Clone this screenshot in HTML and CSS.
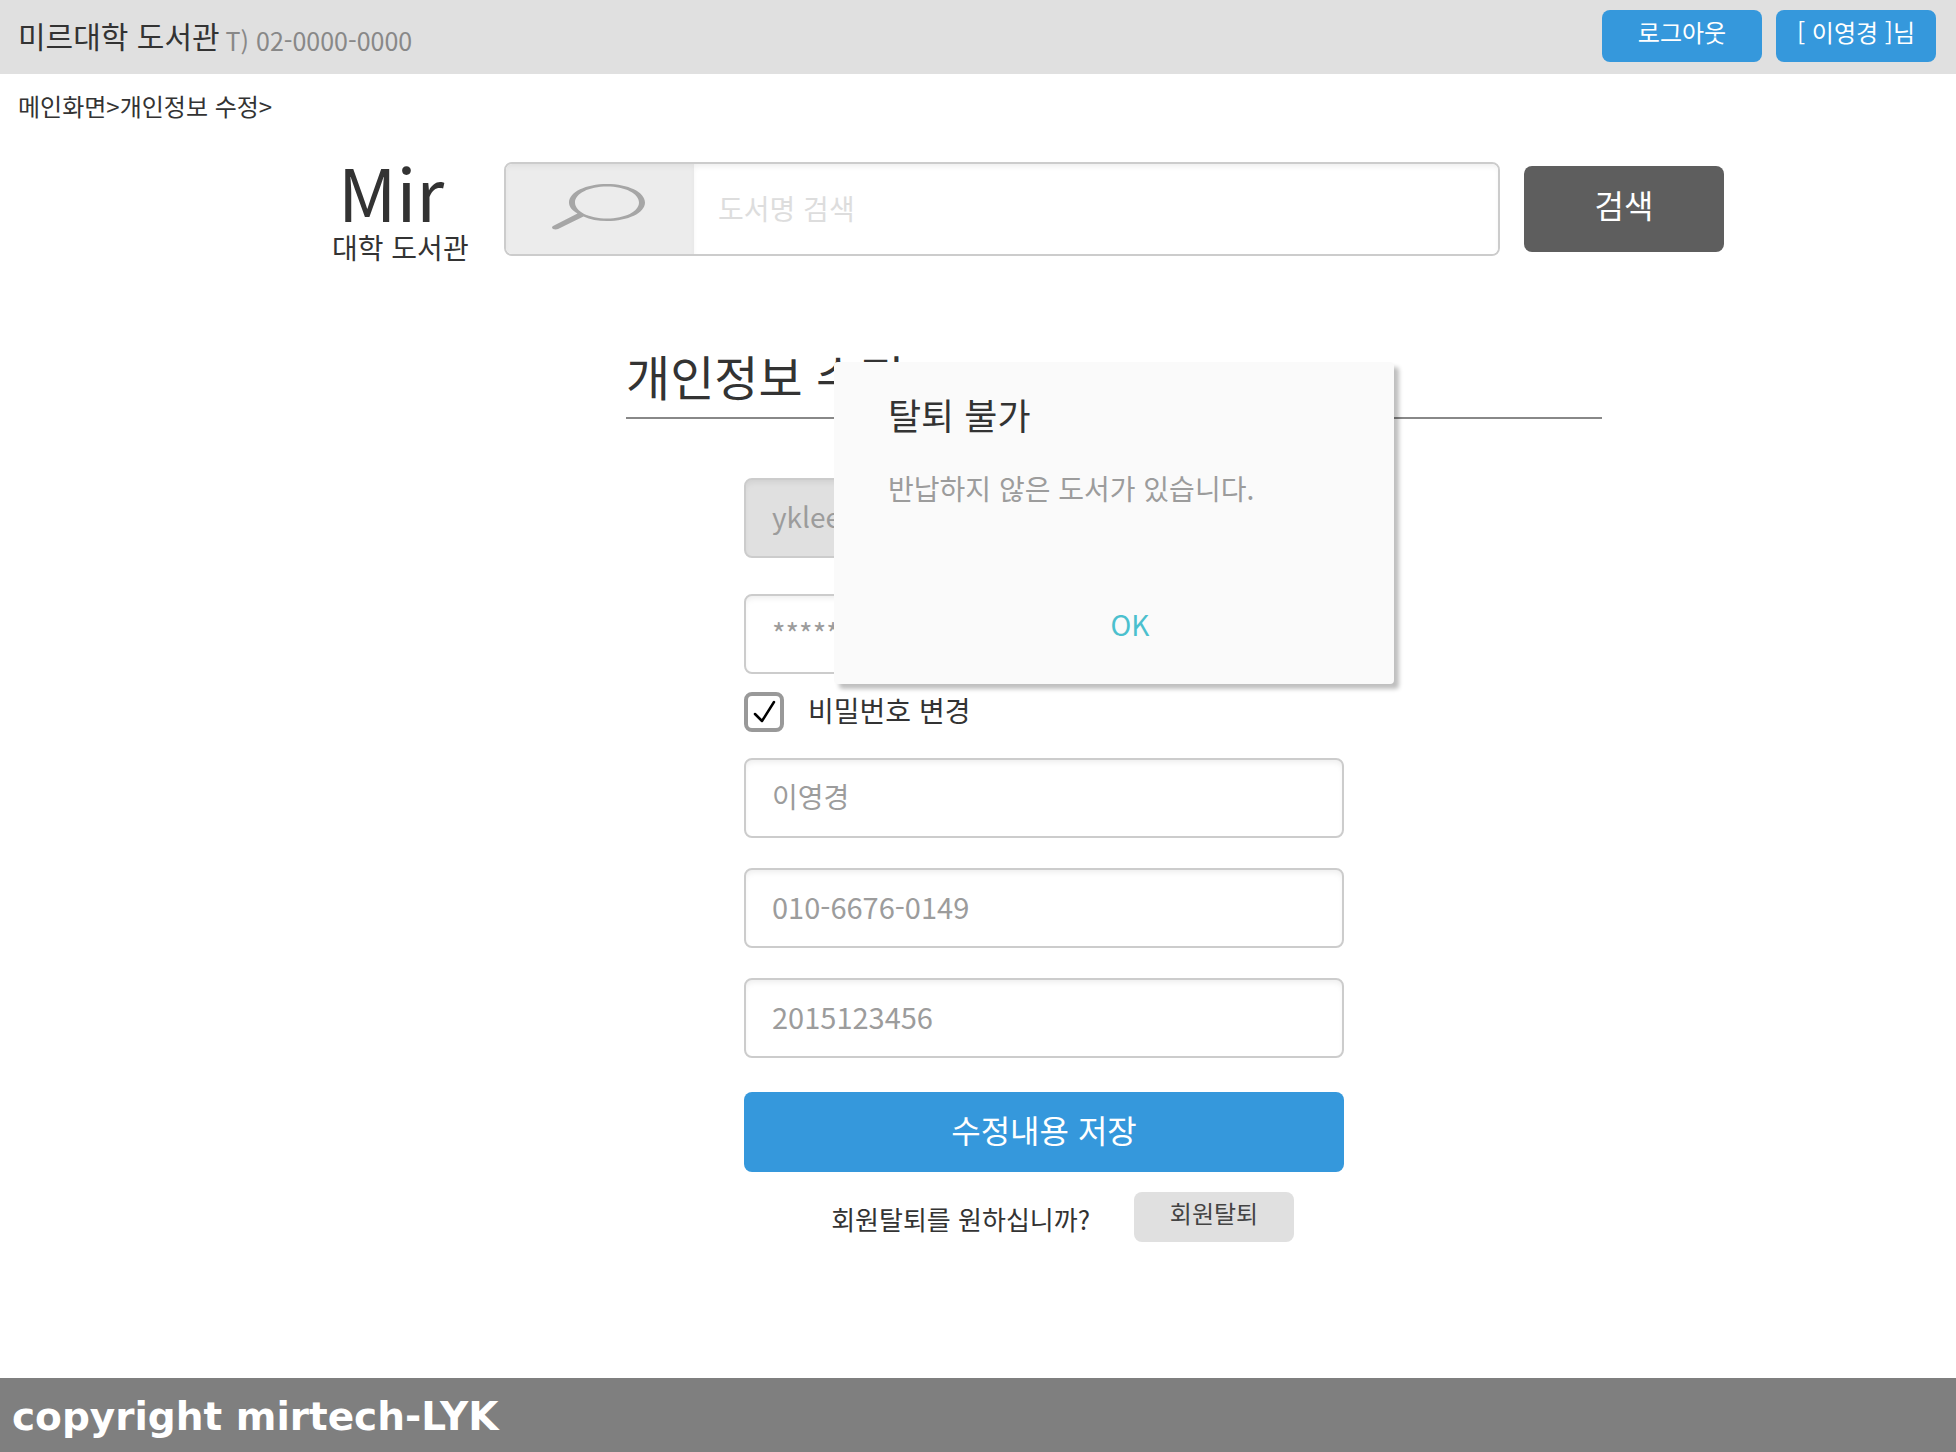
FILE: index.html
```html
<!DOCTYPE html>
<html lang="ko">
<head>
<meta charset="utf-8">
<title>미르대학 도서관 - 개인정보 수정</title>
<meta name="viewport" content="width=device-width, initial-scale=1">
<link rel="stylesheet" href="styles.css">
</head>
<body>
<div class="page">
  <header class="topbar">
    <div class="brand">
      <p class="brand-name">미르대학 도서관</p>
      <p class="phone">T) 02-0000-0000</p>
    </div>
    <div class="account">
      <button type="button" class="btn btn-small btn-blue">로그아웃</button>
      <button type="button" class="btn btn-small btn-blue">[ 이영경 ]님</button>
    </div>
  </header>

  <nav class="breadcrumb" aria-label="현재 위치"><a href="#main">메인화면</a>&gt;<a href="#edit">개인정보 수정</a>&gt;</nav>

  <form class="search" role="search">
    <a class="logo" href="#main"><span class="logo-name">Mir</span><span class="logo-sub">대학 도서관</span></a>
    <div class="search-box">
      <label class="search-icon" for="q" aria-label="도서명 검색">
        <svg width="94" height="46" viewBox="0 0 94 46" fill="none" aria-hidden="true">
          <path fill="#a6a6a6" fill-rule="evenodd" d="M55 0C76 0 93 8 93 18.500S76 37 55 37C46 37 38 35.500 31.500 32.500L6 45C4 46 0 45.500 0 43.500C0 42.800 .5 42.200 1.500 41.700L25.500 29.500C20 26.500 17 22.800 17 18.500C17 8 34 0 55 0ZM55 2.500C37 2.500 23 9.500 23 18.500S37 34.500 55 34.500S87 27.500 87 18.500S73 2.500 55 2.500Z"/>
        </svg>
      </label>
      <input class="search-input" id="q" type="text" placeholder="도서명 검색">
    </div>
    <button type="submit" class="btn btn-search">검색</button>
  </form>

  <main class="content" id="edit">
    <h1 class="title">개인정보 수정</h1>
    <form class="form">
      <input class="field" type="text" aria-label="아이디" value="yklee" disabled>
      <input class="field field-latin field-secret" type="text" aria-label="비밀번호" value="********">
      <label class="check"><input class="check-box" type="checkbox" checked><span>비밀번호 변경</span></label>
      <input class="field" type="text" aria-label="이름" value="이영경">
      <input class="field field-latin" type="text" aria-label="전화번호" value="010-6676-0149">
      <input class="field field-latin" type="text" aria-label="학번" value="2015123456">
      <button type="submit" class="btn btn-blue btn-save">수정내용 저장</button>
      <div class="leave">
        <span class="leave-text">회원탈퇴를 원하십니까?</span>
        <button type="button" class="btn btn-small btn-gray">회원탈퇴</button>
      </div>
    </form>
  </main>

  <footer class="footer">copyright mirtech-LYK</footer>

  <section class="modal" role="alertdialog" aria-labelledby="modal-title" aria-describedby="modal-text">
    <h2 class="modal-title" id="modal-title">탈퇴 불가</h2>
    <p class="modal-text" id="modal-text">반납하지 않은 도서가 있습니다.</p>
    <button type="button" class="modal-ok">OK</button>
  </section>
</div>
</body>
</html>
```

FILE: styles.css
```css
* { box-sizing: border-box; }

body {
  margin: 0;
  background: #fff;
  color: #333;
  font-family: "Noto Sans CJK KR", sans-serif;
  font-size: 24px;
  line-height: 36px;
}

button, input { font: inherit; margin: 0; }
a { color: inherit; text-decoration: none; }
h1, h2, p { margin: 0; font-weight: 400; }

.page {
  position: relative;
  display: flex;
  flex-direction: column;
  min-height: 100vh;
}

.topbar {
  display: flex;
  justify-content: space-between;
  align-items: flex-start;
  padding: 10px 20px 4px 18px;
  background: #e0e0e0;
}
.brand { display: flex; align-items: flex-start; gap: 6px; }
.brand-name { font-size: 30px; line-height: 50px; }
.phone { font-size: 25px; line-height: 60px; color: #888; }
.account { display: flex; gap: 14px; }

.btn {
  border: 0;
  border-radius: 8px;
  color: #fff;
  cursor: pointer;
}
.btn-small { width: 160px; height: 52px; padding: 0 0 8px; }
.btn-blue { background: #3598dc; }
.btn-gray { height: 50px; background: #e0e0e0; color: #444; }

.breadcrumb { padding: 14px 18px; }

.search {
  display: flex;
  align-items: center;
  padding: 17px 232px 0 332px;
}
.logo {
  display: flex;
  flex-direction: column;
  gap: 4px;
  width: 172px;
}
.logo-name { padding-left: 6px; font-size: 72px; line-height: 72px; }
.logo-sub { font-size: 28px; line-height: 32px; }
.search-box {
  display: flex;
  flex: 1;
  height: 94px;
  overflow: hidden;
  border: 2px solid #ccc;
  border-radius: 8px;
}
.search-icon {
  display: flex;
  align-items: center;
  justify-content: center;
  width: 188px;
  padding: 0 2px 4px 0;
  background: #ececec;
  box-shadow: inset 0 4px 6px -2px rgba(0, 0, 0, 0.06);
}
.search-input {
  flex: 1;
  min-width: 0;
  padding: 0 24px 2px;
  border: 0;
  background: #fff;
  box-shadow: inset 0 4px 6px -2px rgba(0, 0, 0, 0.08);
  font-size: 28px;
}
.search-input::placeholder { color: #ddd; opacity: 1; }
.btn-search {
  width: 200px;
  height: 86px;
  margin-left: 24px;
  padding: 0 0 10px;
  background: #5e5e5e;
  font-size: 32px;
}

.content { padding: 76px 354px 136px 626px; }
.title {
  padding-bottom: 6px;
  border-bottom: 2px solid #888;
  font-size: 48px;
  line-height: 72px;
}
.form {
  display: flex;
  flex-direction: column;
  width: 600px;
  margin: 59px 0 0 118px;
}
.field {
  width: 100%;
  height: 80px;
  margin-bottom: 30px;
  padding: 0 26px 4px;
  border: 2px solid #ccc;
  border-radius: 8px;
  background: #fff;
  box-shadow: inset 0 4px 6px -2px rgba(0, 0, 0, 0.08);
  color: #9c9c9c;
  font-size: 28px;
}
.field:disabled { margin-bottom: 36px; background: #e0e0e0; }
.field-latin { font-size: 29px; }
.field-secret { margin-bottom: 18px; }
.check {
  display: flex;
  align-items: flex-start;
  gap: 24px;
  margin-bottom: 26px;
  font-size: 28px;
  line-height: 36px;
}
.check-box {
  appearance: none;
  width: 40px;
  height: 40px;
  border: 4px solid #999;
  border-radius: 8px;
  background: #fff url("data:image/svg+xml,%3Csvg xmlns='http://www.w3.org/2000/svg' viewBox='0 0 32 32'%3E%3Cpath d='M7 18L14 25L26 6' fill='none' stroke='%23000' stroke-width='2.500' stroke-linecap='round' stroke-linejoin='round'/%3E%3C/svg%3E") center / 32px 32px no-repeat;
}
.btn-save { height: 80px; margin-top: 4px; padding: 0 0 6px; font-size: 32px; }
.leave {
  display: flex;
  justify-content: flex-end;
  align-items: center;
  gap: 44px;
  padding: 20px 50px 0 0;
}
.leave-text { padding-top: 4px; font-size: 26px; }

.footer {
  margin-top: auto;
  padding: 4px 12px 0;
  background: #7f7f7f;
  color: #fff;
  font: bold 39px/70px "DejaVu Sans", sans-serif;
}

.modal {
  position: absolute;
  top: 362px;
  left: 834px;
  display: flex;
  flex-direction: column;
  width: 560px;
  height: 322px;
  padding: 25px 54px 28px;
  border-radius: 4px;
  background: #fafafa;
  box-shadow: 5px 5px 4px rgba(0, 0, 0, 0.25);
}
.modal-title { font-size: 36px; line-height: 54px; }
.modal-text { margin-top: 26px; color: #9c9c9c; font-size: 28px; line-height: 42px; }
.modal-ok {
  width: 484px;
  margin-top: auto;
  padding: 0;
  border: 0;
  background: none;
  color: #4bc0ce;
  font-size: 28px;
  line-height: 64px;
}
```
